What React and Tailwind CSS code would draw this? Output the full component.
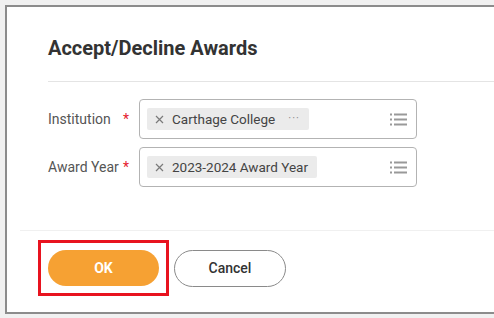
import React from 'react';

const ListIcon = () => (
    <svg width="17" height="13" viewBox="0 0 17 13" className="text-[#999]">
        <rect x="0" y="0.5" width="2" height="2" fill="currentColor" />
        <rect x="4" y="0.5" width="13" height="2" fill="currentColor" />
        <rect x="0" y="5.5" width="2" height="2" fill="currentColor" />
        <rect x="4" y="5.5" width="13" height="2" fill="currentColor" />
        <rect x="0" y="10.5" width="2" height="2" fill="currentColor" />
        <rect x="4" y="10.5" width="13" height="2" fill="currentColor" />
    </svg>
);

const CloseX = () => (
    <svg width="9" height="9" viewBox="0 0 9 9" className="mr-[8px]">
        <path d="M1 1 L8 8 M8 1 L1 8" stroke="#7a7a7a" strokeWidth="1.2" />
    </svg>
);

const Field = ({ label, chip, more }) => (
    <div className="flex items-center">
        <div className="w-[91px] flex items-center text-[14px] text-[#555]">
            <span>{label}</span>
            <span className="ml-auto mr-[10px] text-[#e5202e] text-[14px]">*</span>
        </div>
        <div className="w-[278px] h-[40px] rounded-[4px] border border-[#b3b3b3] flex items-center pl-[7px] pr-[9px]">
            <div className="h-[22px] bg-[#ebebeb] rounded-[2px] flex items-center pl-[8px] pr-[9px] text-[13.5px] text-[#444]">
                <CloseX />
                <span>{chip}</span>
                {more && <span className="ml-[13px] text-[#888] text-[11px] tracking-[1px]">···</span>}
            </div>
            <div className="ml-auto">
                <ListIcon />
            </div>
        </div>
    </div>
);

export default function App() {
    return (
        <div className="w-[494px] h-[318px] bg-[#f1f1f1] pt-[5px] pl-[5px] pb-[4px] overflow-hidden" style={{ fontFamily: 'Roboto, "Liberation Sans", sans-serif' }}>
            <div className="h-full bg-white border-2 border-r-0 border-[#8c8c8c] flex flex-col">
                {/* Header */}
                <div className="pl-[41px] pt-[29px]">
                    <h1 className="text-[20px] leading-[24px] font-bold text-[#333]">Accept/Decline Awards</h1>
                    <div className="mt-[21px] h-px bg-[#e4e4e4]" />
                </div>

                {/* Fields */}
                <div className="pl-[41px] pt-[17px] flex flex-col gap-[8px]">
                    <Field label="Institution" chip="Carthage College" more />
                    <Field label="Award Year" chip="2023-2024 Award Year" />
                </div>

                {/* Footer */}
                <div className="mt-[43px] ml-[13px] h-px bg-[#f0f0f0]" />
                <div className="pl-[31px] pt-[9px] flex items-center">
                    <div className="border-[3px] border-[#e8131f] p-[7px]">
                        <button className="w-[111px] h-[36px] rounded-full bg-[#f6a133] text-white text-[14px] font-bold">
                            OK
                        </button>
                    </div>
                    <button className="ml-[5px] w-[112px] h-[37px] rounded-full border border-[#8a8a8a] bg-white text-[#333] text-[14px] font-medium">
                        Cancel
                    </button>
                </div>
            </div>
        </div>
    );
}
